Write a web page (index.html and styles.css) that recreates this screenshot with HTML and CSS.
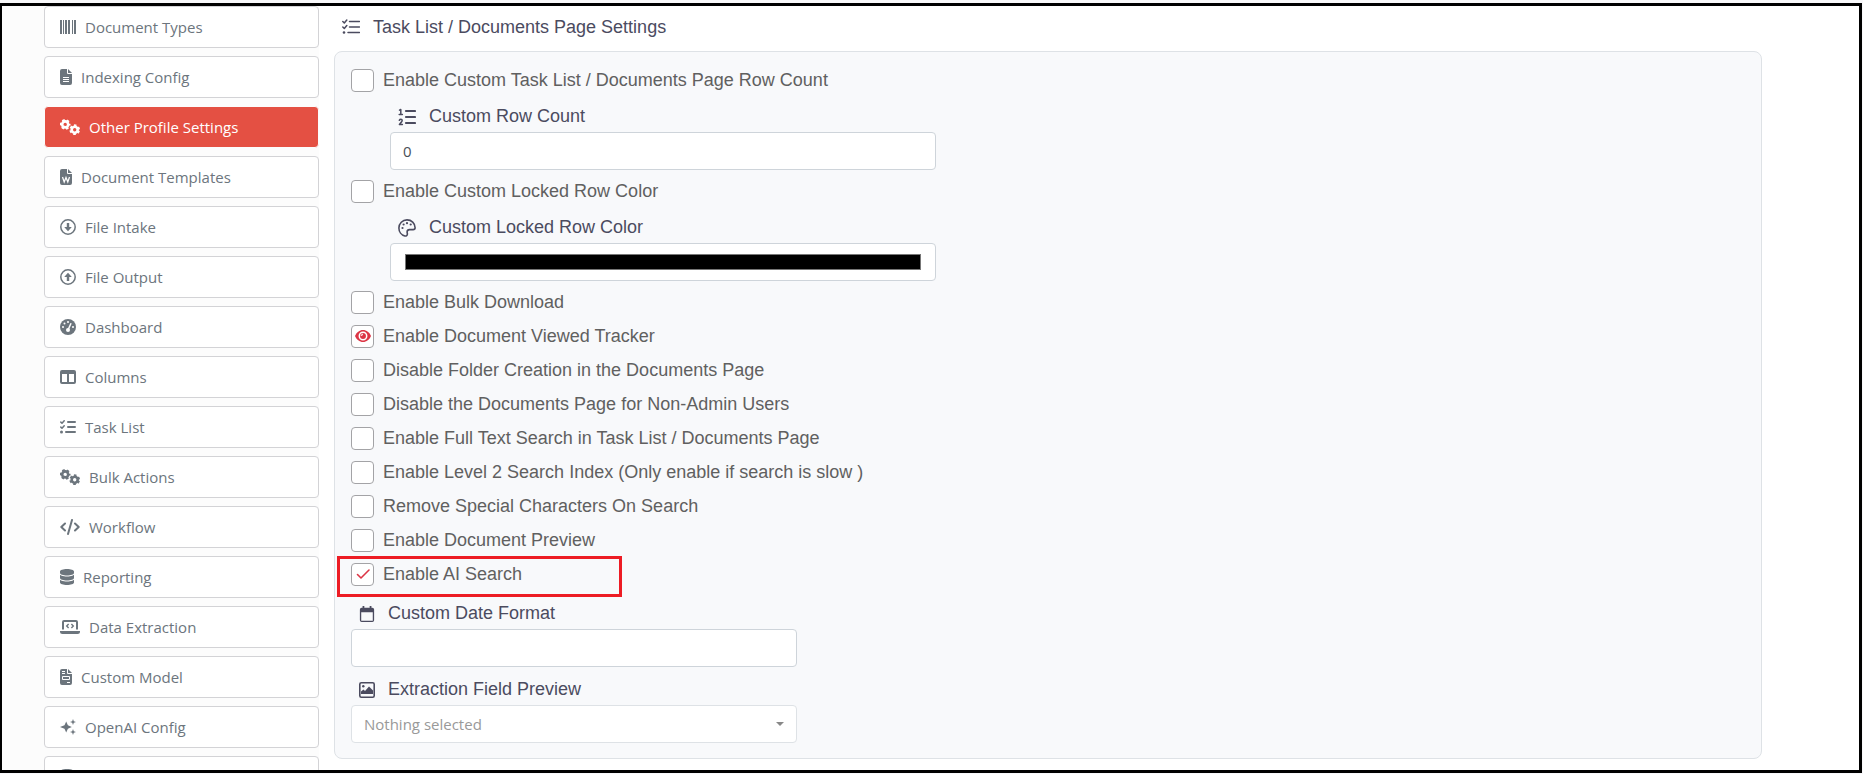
FILE: index.html
```html
<!DOCTYPE html>
<html lang="en">
<head>
    <meta charset="UTF-8">
    <meta name="viewport" content="width=device-width, initial-scale=1.0">
    <title>Other Profile Settings</title>
    <link rel="stylesheet" href="styles.css">
</head>
<body>
    <!-- Shared icons -->
    <svg class="sprite" aria-hidden="true">
        <symbol id="gears" viewBox="0 0 20 16">
            <g fill="none" stroke="currentColor">
                <circle cx="5.2" cy="5.4" r="3" stroke-width="2.6"/>
                <circle cx="5.2" cy="5.4" r="4.4" stroke-width="1.9" stroke-dasharray="2.5 2.108" stroke-dashoffset="1.25"/>
                <circle cx="14.7" cy="10.7" r="3" stroke-width="2.6"/>
                <circle cx="14.7" cy="10.7" r="4.4" stroke-width="1.9" stroke-dasharray="2.5 2.108" stroke-dashoffset="-1.05"/>
            </g>
        </symbol>
        <symbol id="database" viewBox="0 0 448 512">
            <path fill="currentColor" d="M448 80v48c0 44.200-100.300 80-224 80S0 172.200 0 128V80C0 35.800 100.300 0 224 0s224 35.800 224 80zM393.200 214.700c20.800-7.400 39.900-16.900 54.800-28.600V288c0 44.200-100.300 80-224 80S0 332.200 0 288V186.100c14.900 11.800 34 21.200 54.800 28.600C99.700 230.700 159.500 240 224 240s124.300-9.300 169.200-25.300zM0 346.100c14.900 11.800 34 21.200 54.800 28.600C99.700 390.700 159.500 400 224 400s124.300-9.300 169.200-25.300c20.800-7.400 39.900-16.900 54.800-28.600V432c0 44.200-100.300 80-224 80S0 476.200 0 432z"/>
        </symbol>
    </svg>

    <div class="frame">
        <nav class="sidebar">
            <a href="#" class="nav-item">
                <svg class="w16" viewBox="0 0 16 16" fill="currentColor"><path d="M0 1h2v14H0zM3 1h1v14H3zM5 1h2v14H5zM8 1h2v14H8zM12 1h1v14h-1zM14 1h2v14h-2z"/></svg>
                Document Types
            </a>
            <a href="#" class="nav-item">
                <svg class="w12" viewBox="0 0 12 16"><path fill="currentColor" fill-rule="evenodd" d="M2 0h5v4q0 1 1 1h4v9q0 2-2 2H2q-2 0-2-2V2q0-2 2-2zM8 0l4 4H8zM3 8v1h6V8zM3 10v1h6v-1zM3 12v1h6v-1z"/></svg>
                Indexing Config
            </a>
            <a href="#" class="nav-item active">
                <svg class="w20"><use href="#gears"/></svg>
                Other Profile Settings
            </a>
            <a href="#" class="nav-item">
                <svg class="w12" viewBox="0 0 12 16"><path fill="currentColor" d="M2 0h5v4q0 1 1 1h4v9q0 2-2 2H2q-2 0-2-2V2q0-2 2-2zM8 0l4 4H8z"/><path fill="none" stroke="#fff" stroke-width="1.3" d="M2.500 8l1.700 5L6 8.500 7.800 13l1.700-5"/></svg>
                Document Templates
            </a>
            <a href="#" class="nav-item">
                <svg class="w16" viewBox="0 0 16 16"><circle cx="8" cy="8" r="7.200" fill="none" stroke="currentColor" stroke-width="1.500"/><path fill="currentColor" d="M6.800 4h2.400v4h2.600L8 12.200 4.200 8h2.600z"/></svg>
                File Intake
            </a>
            <a href="#" class="nav-item">
                <svg class="w16" viewBox="0 0 16 16"><circle cx="8" cy="8" r="7.200" fill="none" stroke="currentColor" stroke-width="1.500"/><path fill="currentColor" d="M6.800 12h2.400V8h2.600L8 3.800 4.200 8h2.600z"/></svg>
                File Output
            </a>
            <a href="#" class="nav-item">
                <svg class="w16" viewBox="0 0 16 16"><circle cx="8" cy="8" r="8" fill="currentColor"/><g fill="#fff"><circle cx="8" cy="3" r="1"/><circle cx="4.500" cy="4.500" r="1"/><circle cx="3" cy="8" r="1"/><circle cx="13" cy="8" r="1"/><circle cx="8" cy="11" r="2"/></g><path stroke="#fff" stroke-width="1.500" stroke-linecap="round" d="M8 11l2.800-6.300"/></svg>
                Dashboard
            </a>
            <a href="#" class="nav-item">
                <svg class="w16" viewBox="0 0 16 16"><path fill="currentColor" fill-rule="evenodd" d="M2 1h12q2 0 2 2v10q0 2-2 2H2q-2 0-2-2V3q0-2 2-2zM2 5v8h5V5zM9 5v8h5V5z"/></svg>
                Columns
            </a>
            <a href="#" class="nav-item">
                <svg class="w16" viewBox="0 0 16 16" fill="none" stroke="currentColor"><path stroke-width="2" stroke-linecap="round" d="M8 3h7M8 8h7M6 13h9"/><path stroke-width="1.500" stroke-linecap="round" stroke-linejoin="round" d="M.8 3.100L2 4.300l2.200-2.500M.8 8.100L2 9.300l2.200-2.500"/><circle cx="1.500" cy="13" r="1.500" fill="currentColor" stroke="none"/></svg>
                Task List
            </a>
            <a href="#" class="nav-item">
                <svg class="w20"><use href="#gears"/></svg>
                Bulk Actions
            </a>
            <a href="#" class="nav-item">
                <svg class="w20" viewBox="0 0 20 16"><path fill="none" stroke="currentColor" stroke-width="2" stroke-linecap="round" stroke-linejoin="round" d="M5 4.500L1.300 8 5 11.500M15 4.500L18.700 8 15 11.500M12 1L8 15"/></svg>
                Workflow
            </a>
            <a href="#" class="nav-item">
                <svg class="w14"><use href="#database"/></svg>
                Reporting
            </a>
            <a href="#" class="nav-item">
                <svg class="w20" viewBox="0 0 20 16" fill="none" stroke="currentColor"><path stroke-width="2" d="M3 10.500V3q0-1 1-1h12q1 0 1 1v7.500"/><path fill="currentColor" stroke="none" d="M0 12h20v.5Q20 15 17.500 15h-15Q0 15 0 12.500z"/><path stroke-width="1.400" d="M8.600 5L6.700 7l1.900 2M11.400 5l1.900 2-1.900 2"/></svg>
                Data Extraction
            </a>
            <a href="#" class="nav-item">
                <svg class="w12" viewBox="0 0 12 16"><path fill="currentColor" fill-rule="evenodd" d="M2 0h5v4q0 1 1 1h4v9q0 2-2 2H2q-2 0-2-2V2q0-2 2-2zM8 0l4 4H8zM2 2v1h3V2zM2 4v1h3V4zM3 7q-1 0-1 1v2q0 1 1 1h6q1 0 1-1V8q0-1-1-1zM3 8h6v2H3zM7 13v1h3v-1z"/></svg>
                Custom Model
            </a>
            <a href="#" class="nav-item">
                <svg class="w16" viewBox="0 0 16 16" fill="currentColor"><path d="M6.200 2.500l1.700 3.800 3.900 1.700-3.900 1.700-1.700 3.800-1.700-3.800L0 8l4.500-1.700zM13 0l.8 2.200L16 3l-2.200.8L13 6l-.8-2.200L10 3l2.200-.8zM13 10l.8 2.200 2.200.8-2.200.8L13 16l-.8-2.200L10 13l2.200-.8z"/></svg>
                OpenAI Config
            </a>
            <a href="#" class="nav-item">
                <svg class="w14"><use href="#database"/></svg>
                Lookups
            </a>
        </nav>

        <main class="content">
            <h2 class="section-title">
                <svg class="w18" viewBox="0 0 18 18" fill="none" stroke="currentColor" stroke-width="1.500" stroke-linecap="round" stroke-linejoin="round"><path d="M7.500 3.500h10M7.500 9h10M6 14.500h11.500M.8 3.500l1.500 1.500 2.500-3M.8 9l1.500 1.500 2.500-3"/><circle cx="2" cy="14.500" r="1.300" fill="currentColor" stroke="none"/></svg>
                Task List / Documents Page Settings
            </h2>

            <form class="card">
                <label class="check"><input type="checkbox">Enable Custom Task List / Documents Page Row Count</label>
                <div class="field nested">
                    <label for="rowCount">
                        <svg class="w18" viewBox="0 0 18 18" fill="none" stroke="currentColor" stroke-linecap="round"><path stroke-width="2.200" d="M8 3h9M8 9h9M8 15h9"/><path stroke-width="1.500" stroke-linejoin="round" d="M1.500 2.200L2.800 1.500v5M1.200 6.600h3.200M1.300 12.300q.5-1 1.600-1 1.300 0 1.300 1.200 0 .8-2.800 3.900h3"/></svg>
                        Custom Row Count
                    </label>
                    <input type="text" id="rowCount" class="control" value="0">
                </div>

                <label class="check"><input type="checkbox">Enable Custom Locked Row Color</label>
                <div class="field nested">
                    <label for="rowColor">
                        <svg class="w18" viewBox="0 0 18 18"><path fill="none" stroke="currentColor" stroke-width="1.600" d="M9 .9C4.500.9.900 4.500.900 9c0 3.800 2.500 7.100 6 8 1.400.3 2.500-.6 2.500-1.900 0-.8-.3-1.300-.3-2 0-1.400 1.100-2.500 2.500-2.500h3.500c1.200 0 2-.7 2-1.900C17 4.300 13.500.9 9 .9z"/><g fill="currentColor"><circle cx="4.500" cy="9" r="1.100"/><circle cx="5.600" cy="5.500" r="1.100"/><circle cx="9" cy="4.200" r="1.100"/><circle cx="12.700" cy="5.500" r="1.100"/></g></svg>
                        Custom Locked Row Color
                    </label>
                    <input type="color" id="rowColor" class="control" value="#000000">
                </div>

                <label class="check"><input type="checkbox">Enable Bulk Download</label>
                <label class="check">
                    <input type="checkbox" checked>
                    <svg class="mark" viewBox="0 0 16 16"><path fill="#dc3545" d="M8 2C4.500 2 1.500 4.500 0 8c1.500 3.500 4.500 6 8 6s6.500-2.500 8-6c-1.500-3.500-4.500-6-8-6z"/><circle cx="8" cy="8" r="3.700" fill="none" stroke="#fff" stroke-width="1.500"/><path fill="#fff" d="M8 5.500Q8 8 5.500 8 6 6 8 5.500z"/></svg>
                    Enable Document Viewed Tracker
                </label>
                <label class="check"><input type="checkbox">Disable Folder Creation in the Documents Page</label>
                <label class="check"><input type="checkbox">Disable the Documents Page for Non-Admin Users</label>
                <label class="check"><input type="checkbox">Enable Full Text Search in Task List / Documents Page</label>
                <label class="check"><input type="checkbox">Enable Level 2 Search Index (Only enable if search is slow )</label>
                <label class="check"><input type="checkbox">Remove Special Characters On Search</label>
                <label class="check"><input type="checkbox">Enable Document Preview</label>
                <label class="check highlight">
                    <input type="checkbox" checked>
                    <svg class="mark" viewBox="0 0 16 16"><path fill="none" stroke="#dc3545" stroke-width="1.600" stroke-linecap="round" stroke-linejoin="round" d="M2.500 8.500l3.500 3.500 8-8"/></svg>
                    Enable AI Search
                </label>

                <div class="field">
                    <label for="dateFormat">
                        <svg class="w16" viewBox="0 0 16 18"><path fill="currentColor" fill-rule="evenodd" d="M3 0h2v2h6V0h2v2h1q2 0 2 2v12q0 2-2 2H2q-2 0-2-2V4q0-2 2-2h1zM1.500 7v9.500h13V7z"/></svg>
                        Custom Date Format
                    </label>
                    <input type="text" id="dateFormat" class="control">
                </div>
                <div class="field">
                    <label for="fieldPreview">
                        <svg class="w16" viewBox="0 0 16 16"><rect x=".8" y=".8" width="14.400" height="14.400" rx="1.500" fill="none" stroke="currentColor" stroke-width="1.600"/><path fill="currentColor" d="M2 12V9.500l2.500-2 1.500 1.500L10 4.500l4 4V12z"/><circle cx="4.300" cy="4.300" r="1.200" fill="currentColor"/></svg>
                        Extraction Field Preview
                    </label>
                    <div class="select-wrap">
                        <select id="fieldPreview" class="control">
                            <option>Nothing selected</option>
                        </select>
                    </div>
                </div>
            </form>
        </main>
    </div>
</body>
</html>
```
FILE: styles.css
```css
*,
*::before,
*::after {
    box-sizing: border-box;
}

body {
    margin: 0;
    height: 100vh;
    padding-top: 3px;
    overflow: hidden;
    background-color: #f8f8fa;
    font-family: "Liberation Sans", Arial, sans-serif;
    font-size: 18px;
    color: #606060;
}

svg {
    flex: none;
    height: 16px;
}

.sprite {
    display: none;
}

.w12 { width: 12px; }
.w14 { width: 14px; }
.w16 { width: 16px; }
.w18 { width: 18px; height: 18px; }
.w20 { width: 20px; }

.frame {
    display: flex;
    height: calc(100vh - 4px);
    margin-right: 1px;
    border: 3px solid #000;
    border-left-width: 2px;
    background-color: #fff;
    overflow: hidden;
}

/* Sidebar */
.sidebar {
    flex: none;
    display: flex;
    flex-direction: column;
    gap: 8px;
    width: 317px;
    padding-left: 42px;
    background-color: #fcfcfc;
}

.nav-item {
    flex: none;
    display: flex;
    align-items: center;
    gap: 9px;
    height: 42px;
    padding: 0 15px;
    border: 1px solid #d3d3d6;
    border-radius: 4px;
    background-color: #fff;
    font-family: "Open Sans", "Noto Sans", sans-serif;
    font-size: 15px;
    color: #6c757d;
    text-decoration: none;
}

.nav-item.active {
    border-color: #fcfcfc;
    background-color: #e45043;
    color: #fff;
}

/* Settings */
.content {
    flex: 1;
    padding: 0 97px 0 15px;
}

.section-title {
    display: flex;
    align-items: center;
    gap: 13px;
    height: 42px;
    margin: 0 0 3px;
    padding-left: 8px;
    font-size: 18px;
    font-weight: 400;
    color: #4b4b5f;
}

.card {
    padding: 11px 16px 15px;
    border: 1px solid #dee2e6;
    border-radius: 8px;
    background-color: #f8f9fb;
}

.check {
    position: relative;
    display: flex;
    align-items: center;
    width: fit-content;
    height: 34px;
}

.check input {
    appearance: none;
    width: 23px;
    height: 23px;
    margin: 0 9px 0 0;
    border: 1px solid #a3a3a6;
    border-radius: 4px;
    background-color: #fff;
}

.mark {
    position: absolute;
    left: 4px;
    width: 16px;
}

.highlight::after {
    content: "";
    position: absolute;
    top: -1px;
    left: -14px;
    width: 285px;
    height: 41px;
    border: 3px solid #ed1c24;
}

.field {
    width: 32%;
    padding-top: 3px;
}

.field.nested {
    width: 42%;
    padding: 0 0 4px 39px;
}

.field label {
    display: flex;
    align-items: center;
    gap: 13px;
    height: 35px;
    padding: 4px 0 0 8px;
    color: #4b4b5f;
}

.control {
    display: block;
    width: 100%;
    height: 38px;
    padding: 0 12px;
    border: 1px solid #ced4da;
    border-radius: 4px;
    background-color: #fff;
    font-family: "Open Sans", "Noto Sans", sans-serif;
    font-size: 15px;
    color: #495057;
}

input[type="color"] {
    padding: 6px 12px;
}

.select-wrap {
    position: relative;
}

.select-wrap select {
    appearance: none;
    border-color: #dee2e6;
    color: #999;
}

.select-wrap::after {
    content: "";
    position: absolute;
    top: 17px;
    right: 13px;
    border: 4px solid transparent;
    border-top-color: #888;
    border-bottom: 0;
}
```
